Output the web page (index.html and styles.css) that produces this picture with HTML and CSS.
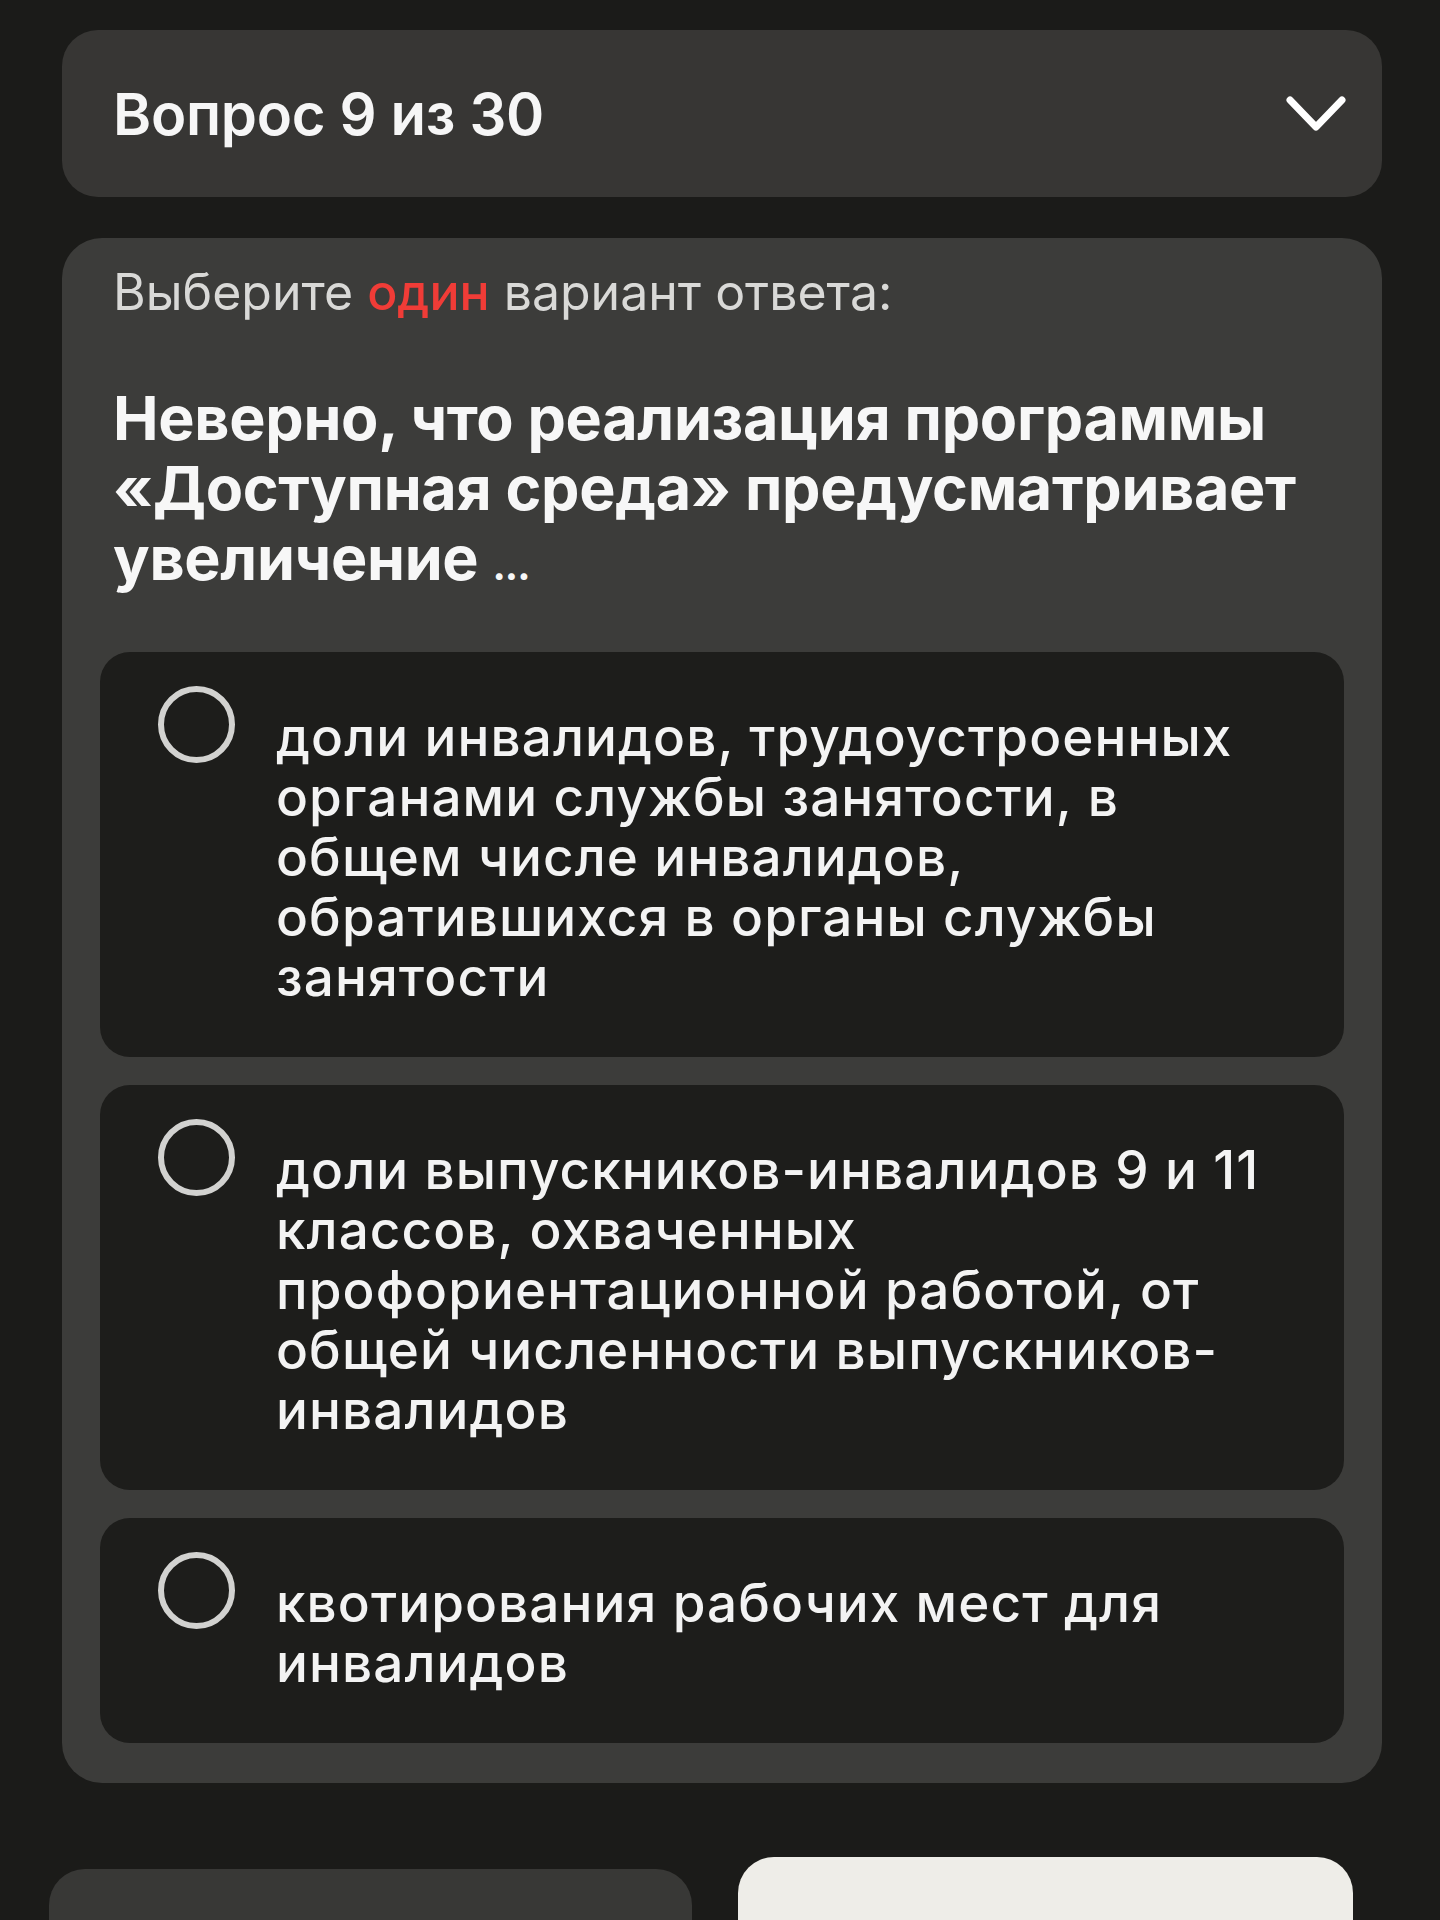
FILE: index.html
```html
<!DOCTYPE html>
<html lang="ru">
<head>
<meta charset="utf-8">
<title>Вопрос 9 из 30</title>
<link rel="stylesheet" href="styles.css">
</head>
<body>
<div class="page">
  <div class="header">
    <span class="header-title">Вопрос 9 из 30</span>
    <svg class="chevron" viewBox="0 0 62 38" width="62" height="38" aria-hidden="true">
      <path d="M5 5 L31 32 L57 5" fill="none" stroke="#ffffff" stroke-width="7" stroke-linecap="round" stroke-linejoin="round"/>
    </svg>
  </div>

  <div class="card">
    <p class="hint">Выберите <span class="accent">один</span> вариант ответа:</p>
    <h1 class="question">Неверно, что реализация программы<br>«Доступная среда» предусматривает<br>увеличение <span class="dots">...</span></h1>

    <div class="options">
      <div class="option">
        <span class="radio"></span>
        <span class="option-text">доли инвалидов, трудоустроенных<br>органами службы занятости, в<br>общем числе инвалидов,<br>обратившихся в органы службы<br>занятости</span>
      </div>
      <div class="option">
        <span class="radio"></span>
        <span class="option-text">доли выпускников-инвалидов 9 и 11<br>классов, охваченных<br>профориентационной работой, от<br>общей численности выпускников-<br>инвалидов</span>
      </div>
      <div class="option">
        <span class="radio"></span>
        <span class="option-text">квотирования рабочих мест для<br>инвалидов</span>
      </div>
    </div>
  </div>

  <div class="actions">
    <div class="btn btn-dark"></div>
    <div class="btn btn-light"></div>
  </div>
</div>
</body>
</html>
```

FILE: styles.css
```css
html, body {
  margin: 0;
  padding: 0;
  background: #1b1b19;
}

body {
  font-family: "Inter", "Noto Sans", sans-serif;
  color: #f4f4f4;
  height: 1920px;
  overflow: hidden;
}

.page {
  width: 1320px;
  padding: 30px 0 0 62px;
}

.header {
  height: 167px;
  box-sizing: border-box;
  border-radius: 36px;
  background: #373634;
  display: flex;
  align-items: center;
  justify-content: space-between;
  padding: 0 35px 0 51px;
}

.header-title {
  font-size: 58px;
  line-height: 70px;
  font-weight: 600;
  letter-spacing: -0.3px;
  color: #f6f6f6;
}

.chevron {
  display: block;
}

.card {
  margin-top: 41px;
  background: #3c3c3a;
  border-radius: 40px;
  padding: 24px 38px 40px 38px;
}

.hint {
  margin: 0 0 0 13px;
  font-size: 50px;
  line-height: 60px;
  font-weight: 400;
  color: #d9d9d7;
}

.accent {
  color: #f03c37;
  font-weight: 500;
}

.question {
  margin: 61px 0 0 13px;
  font-size: 61px;
  line-height: 70px;
  font-weight: 700;
  color: #f7f7f7;
  letter-spacing: -0.3px;
}

.dots {
  font-size: 40px;
  line-height: 0;
  letter-spacing: -1px;
}

.options {
  margin-top: 59px;
  display: flex;
  flex-direction: column;
  gap: 28px;
}

.option {
  background: #1d1d1b;
  border-radius: 30px;
  display: flex;
  align-items: flex-start;
  padding: 34px 60px 50px 58px;
}

.radio {
  flex: none;
  width: 77px;
  height: 77px;
  box-sizing: border-box;
  border: 6px solid #d2d2d0;
  border-radius: 50%;
}

.option-text {
  margin-left: 41px;
  padding-top: 21px;
  font-size: 53px;
  line-height: 60px;
  font-weight: 500;
  color: #f3f3f3;
  letter-spacing: 1.1px;
}

.actions {
  margin: 86px 0 0 -13px;
  display: flex;
  gap: 46px;
}

.btn {
  height: 120px;
  border-radius: 36px;
}

.btn-dark {
  flex: 0 0 643px;
  background: #383836;
}

.btn-light {
  flex: 0 0 615px;
  background: #eeede8;
  margin-top: -12px;
}
```
